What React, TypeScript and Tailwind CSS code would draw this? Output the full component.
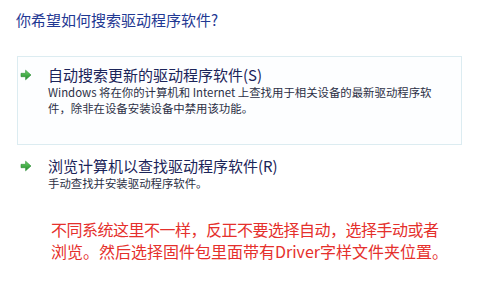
import React from "react";

const Arrow = () => (
  <svg width="12" height="12" viewBox="0 0 12 12" className="block">
    <defs>
      <linearGradient id="g" x1="0" y1="0" x2="0" y2="1">
        <stop offset="0" stopColor="#6fd36a" />
        <stop offset="1" stopColor="#1f8a2a" />
      </linearGradient>
    </defs>
    <path d="M1 4.3 H5.6 V1.2 L11 6 L5.6 10.8 V7.7 H1 Z" fill="url(#g)" stroke="#2a8a33" strokeWidth="0.6" strokeLinejoin="round" />
  </svg>
);

interface OptionProps {
  title: string;
  lines: string[];
  boxed?: boolean;
}

const Option: React.FC<OptionProps> = ({ title, lines, boxed }) => (
  <div
    className={
      "ml-[17px] w-[445px] flex border " +
      (boxed ? "h-[89px] border-[#dcecf1] bg-[#fdfeff] pt-[8px]" : "border-transparent")
    }
  >
    <div className="w-[30px] shrink-0 pl-[2px] pt-[4px]">
      <Arrow />
    </div>
    <div>
      <div className="text-[15px] leading-[19px] text-[#1b2459]">{title}</div>
      <div className="text-[11.4px] leading-[16px] text-[#2b2f45]">
        {lines.map((l, i) => (
          <div key={i}>{l}</div>
        ))}
      </div>
    </div>
  </div>
);

export default function App() {
  return (
    <div
      className="w-[500px] h-[282px] bg-white overflow-hidden"
      style={{ fontFamily: '"Noto Sans CJK SC", "Noto Sans", sans-serif' }}
    >
      <div className="pt-[10px] pl-[16px] text-[15px] leading-[20px] text-[#1f3893]">
        你希望如何搜索驱动程序软件?
      </div>
      <div className="mt-[26px]">
        <Option
          boxed
          title="自动搜索更新的驱动程序软件(S)"
          lines={[
            "Windows 将在你的计算机和 Internet 上查找用于相关设备的最新驱动程序软",
            "件，除非在设备安装设备中禁用该功能。",
          ]}
        />
      </div>
      <div className="mt-[10px]">
        <Option title="浏览计算机以查找驱动程序软件(R)" lines={["手动查找并安装驱动程序软件。"]} />
      </div>
      <div className="mt-[26px] pl-[51px] text-[16px] leading-[22px] text-[#e5302c]">
        <div className="tracking-[-0.5px]">不同系统这里不一样，反正不要选择自动，选择手动或者</div>
        <div>浏览。然后选择固件包里面带有Driver字样文件夹位置。</div>
      </div>
    </div>
  );
}
